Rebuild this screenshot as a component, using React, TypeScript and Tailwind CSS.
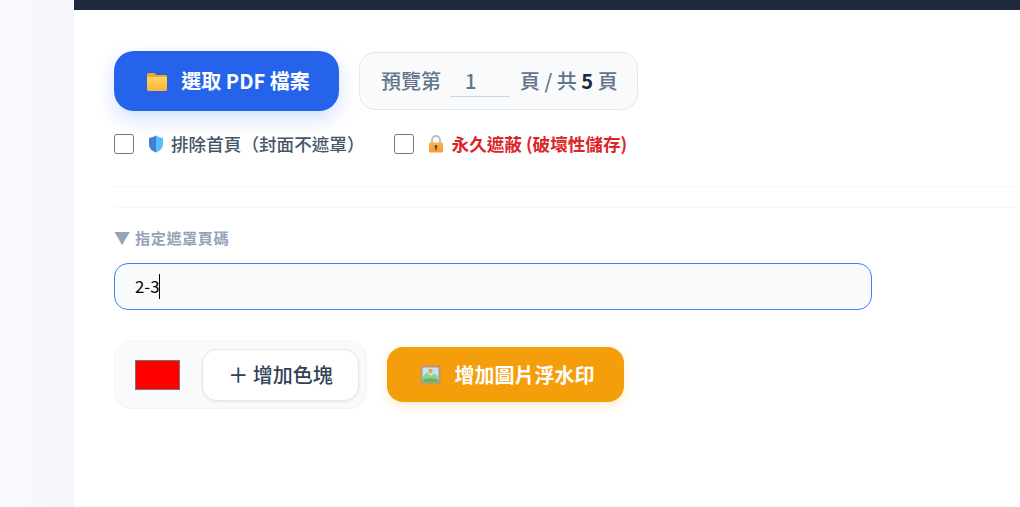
import React from "react";

const font = { fontFamily: '"Noto Sans CJK TC", "Noto Sans", sans-serif' };

function Divider({ className = "" }: { className?: string }) {
  return <div className={`h-px bg-[#f6f7f9] ${className}`} />;
}

function FolderIcon() {
  return (
    <svg width="22" height="22" viewBox="0 -1 22 22" className="shrink-0">
      <defs>
        <linearGradient id="fg" x1="0" y1="0" x2="0" y2="1">
          <stop offset="0" stopColor="#ffd75e" />
          <stop offset="1" stopColor="#feb13f" />
        </linearGradient>
      </defs>
      <path d="M1 3.500C1 2.700 1.600 2 2.400 2h5.400c.5 0 .9.2 1.200.6L10.200 4h9.400c.8 0 1.400.6 1.400 1.400V8H1z" fill="#f5a623" />
      <path d="M1 6h20v12.600c0 .8-.6 1.400-1.400 1.400H2.400C1.600 20 1 19.400 1 18.600z" fill="url(#fg)" />
    </svg>
  );
}

function ShieldIcon() {
  return (
    <svg width="16" height="18" viewBox="0 0 16 18" className="block shrink-0">
      <path d="M8 .6C5.800 2.200 3.400 2.800 1 3v6.200c0 3.800 3 6.700 7 8.200 4-1.500 7-4.400 7-8.200V3C12.600 2.800 10.200 2.200 8 .6z" fill="#55bdfb" />
      <path d="M8 .6C5.800 2.200 3.400 2.800 1 3v6.200c0 3.800 3 6.700 7 8.200z" fill="#3f7fd6" />
    </svg>
  );
}

function LockIcon() {
  return (
    <svg width="16" height="18" viewBox="0 0 16 18" className="block shrink-0">
      <defs>
        <linearGradient id="lg" x1="0" y1="0" x2="0" y2="1">
          <stop offset="0" stopColor="#fbb544" />
          <stop offset="1" stopColor="#f69a34" />
        </linearGradient>
      </defs>
      <path d="M4 8V5a4 4 0 0 1 8 0v3" fill="none" stroke="#b9b9c4" strokeWidth="1.800" />
      <rect x="1" y="7.500" width="14" height="10" rx="1.200" fill="url(#lg)" />
      <circle cx="8" cy="11.500" r="1.400" fill="#4a4a52" />
      <rect x="7.300" y="11.500" width="1.400" height="3.500" fill="#4a4a52" />
    </svg>
  );
}

function PictureIcon() {
  return (
    <svg width="21" height="20" viewBox="0 0 21 20" className="shrink-0">
      <rect x="0.500" y="0.500" width="20" height="19" fill="#c98f72" />
      <rect x="2.500" y="2.500" width="16" height="15" fill="#bfe6f5" />
      <circle cx="10.500" cy="6" r="2.200" fill="#f2a43a" />
      <path d="M2.500 11.500 7 7.500l4 3.500 3.500-2.500 4 3v6h-16z" fill="#8fcf9a" />
      <path d="M2.500 15c3-2.500 12-2.500 16 0v2.500h-16z" fill="#6db34f" />
    </svg>
  );
}

export default function App() {
  return (
    <div style={font} className="flex h-[507px] w-[1020px] overflow-hidden bg-white">
      <aside className="h-full w-[74px] shrink-0 bg-gradient-to-r from-[#f8fafc] to-[#f4f6fb]" />
      <main className="flex min-w-0 flex-1 flex-col">
        <div className="h-[10px] shrink-0 bg-[#1e293b]" />
        <div className="flex flex-col pl-10 pt-[41px]">
          <div className="flex items-center gap-5">
            <button className="flex h-[60px] w-[225px] items-center justify-center gap-[13px] rounded-[20px] bg-[#2563eb] pl-[3px] text-[20px] font-bold text-white shadow-[0_8px_20px_rgba(37,99,235,0.2)]">
              <FolderIcon />
              <span>選取 PDF 檔案</span>
            </button>
            <div className="flex h-[58px] w-[279px] items-center rounded-[16px] border border-[#e2e8f0] bg-[#f8fafc] pl-[21px] text-[20px] font-medium text-[#64748b]">
              <span>預覽第</span>
              <span className="ml-[9px] mr-[10px] mt-[1px] flex h-[30px] w-[60px] items-center justify-start border-b border-[#cbd5e1] pl-[15px] text-[20px] font-medium">1</span>
              <span>頁 / 共 <b className="font-bold text-[#1e293b]">5</b> 頁</span>
            </div>
          </div>
          <div className="mt-[19px] flex h-[28px] items-center text-[17.6px] font-medium text-[#475569]">
            <span className="h-5 w-5 rounded-[3px] border border-[#767676] bg-white" />
            <span className="ml-[14px]"><ShieldIcon /></span>
            <span className="ml-[7px]">排除首頁（封面不遮罩）</span>
            <span className="ml-[29px] h-5 w-5 rounded-[3px] border border-[#767676] bg-white" />
            <span className="ml-[14px]"><LockIcon /></span>
            <span className="ml-[8px] font-bold text-[#dc2626]">永久遮蔽 (破壞性儲存)</span>
          </div>
          <Divider className="mt-[28px]" />
          <Divider className="mt-[20px]" />
          <div className="mt-[19px] flex h-5 items-center gap-[5px] text-[15.2px] font-bold tracking-[0.5px] text-[#94a3b8]">
            <span className="text-[16px] tracking-normal">▼</span>
            <span>指定遮罩頁碼</span>
          </div>
          <div className="mt-[16px] flex h-[47px] w-[758px] items-center rounded-[14px] border border-[#3b82f6] bg-[#f8fafc] pl-5 text-[16.8px] text-black">
            <span className="pt-[1px]">2-3</span>
            <span className="h-[25px] w-px bg-black" />
          </div>
          <div className="mt-[30px] flex items-center gap-5">
            <div className="flex h-[69px] w-[253px] items-center rounded-[18px] border border-[#f1f5f9] bg-[#f8fafc] pl-5">
              <div className="h-[30px] w-[45px] border border-[#767676] bg-[#ff0000]" />
              <button className="ml-[22px] flex h-[52px] w-[157px] items-center justify-center rounded-[15px] border border-[#e2e8f0] bg-white text-[20px] font-medium text-[#334155] shadow-[0_1px_3px_rgba(0,0,0,0.08)]">
                ＋ 增加色塊
              </button>
            </div>
            <button className="flex h-[55px] w-[237px] items-center justify-center gap-[14px] rounded-[16px] bg-[#f59e0b] pl-[3px] text-[20px] font-bold text-white shadow-[0_4px_12px_rgba(245,158,11,0.2)]">
              <PictureIcon />
              <span>增加圖片浮水印</span>
            </button>
          </div>
        </div>
      </main>
    </div>
  );
}
